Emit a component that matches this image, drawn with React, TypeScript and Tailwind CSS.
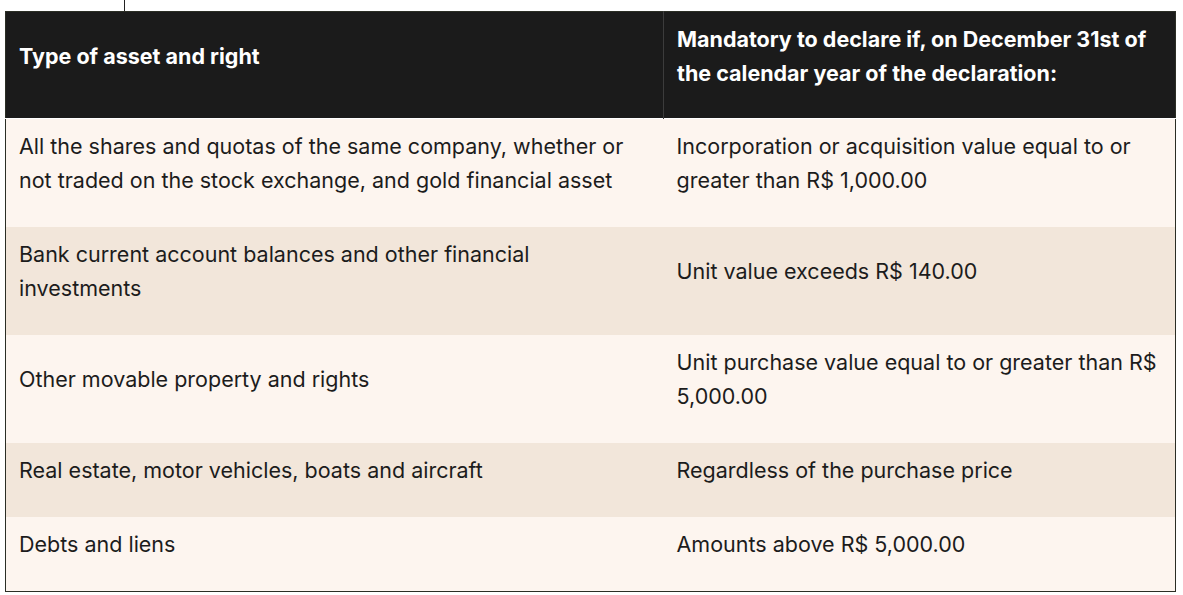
const rows = [
  {
    asset: "All the shares and quotas of the same company, whether or not traded on the stock exchange, and gold financial asset",
    rule: "Incorporation or acquisition value equal to or greater than R$ 1,000.00"
  },
  {
    asset: "Bank current account balances and other financial investments",
    rule: "Unit value exceeds R$ 140.00"
  },
  {
    asset: "Other movable property and rights",
    rule: "Unit purchase value equal to or greater than R$ 5,000.00"
  },
  {
    asset: "Real estate, motor vehicles, boats and aircraft",
    rule: "Regardless of the purchase price"
  },
  {
    asset: "Debts and liens",
    rule: "Amounts above R$ 5,000.00"
  }
];

export default function App() {
  return (
    <div className="min-h-screen bg-white font-['Inter',sans-serif]">
      <div className="ml-[124px] h-[11px] w-px bg-[#222]" />
      <table className="ml-[5px] w-[1171px] table-fixed border-collapse border border-[#2b2e25] text-[21.5px] leading-[34px]">
        <colgroup>
          <col className="w-[658px]" />
          <col />
        </colgroup>
        <thead>
          <tr className="bg-[#1b1b1b] text-white font-bold border-b border-b-white">
            <th className="px-[13px] pt-[10px] pb-[28px] text-left align-middle">Type of asset and right</th>
            <th className="px-[13px] pt-[10px] pb-[28px] text-left align-middle border-l border-l-[#3c3c3c]">
              Mandatory to declare if, on December 31st of the calendar year of the declaration:
            </th>
          </tr>
        </thead>
        <tbody className="text-[#1c1c1c]">
          {rows.map((row, i) => (
            <tr
              key={row.asset}
              className={i % 2 === 0 ? "bg-[#fdf5ef]" : "bg-[#f2e6da]"}>
              <td className="px-[13px] pt-[10px] pb-[30px] align-middle">{row.asset}</td>
              <td className="px-[13px] pt-[10px] pb-[30px] align-middle">{row.rule}</td>
            </tr>
          ))}
        </tbody>
      </table>
    </div>
  );
}
